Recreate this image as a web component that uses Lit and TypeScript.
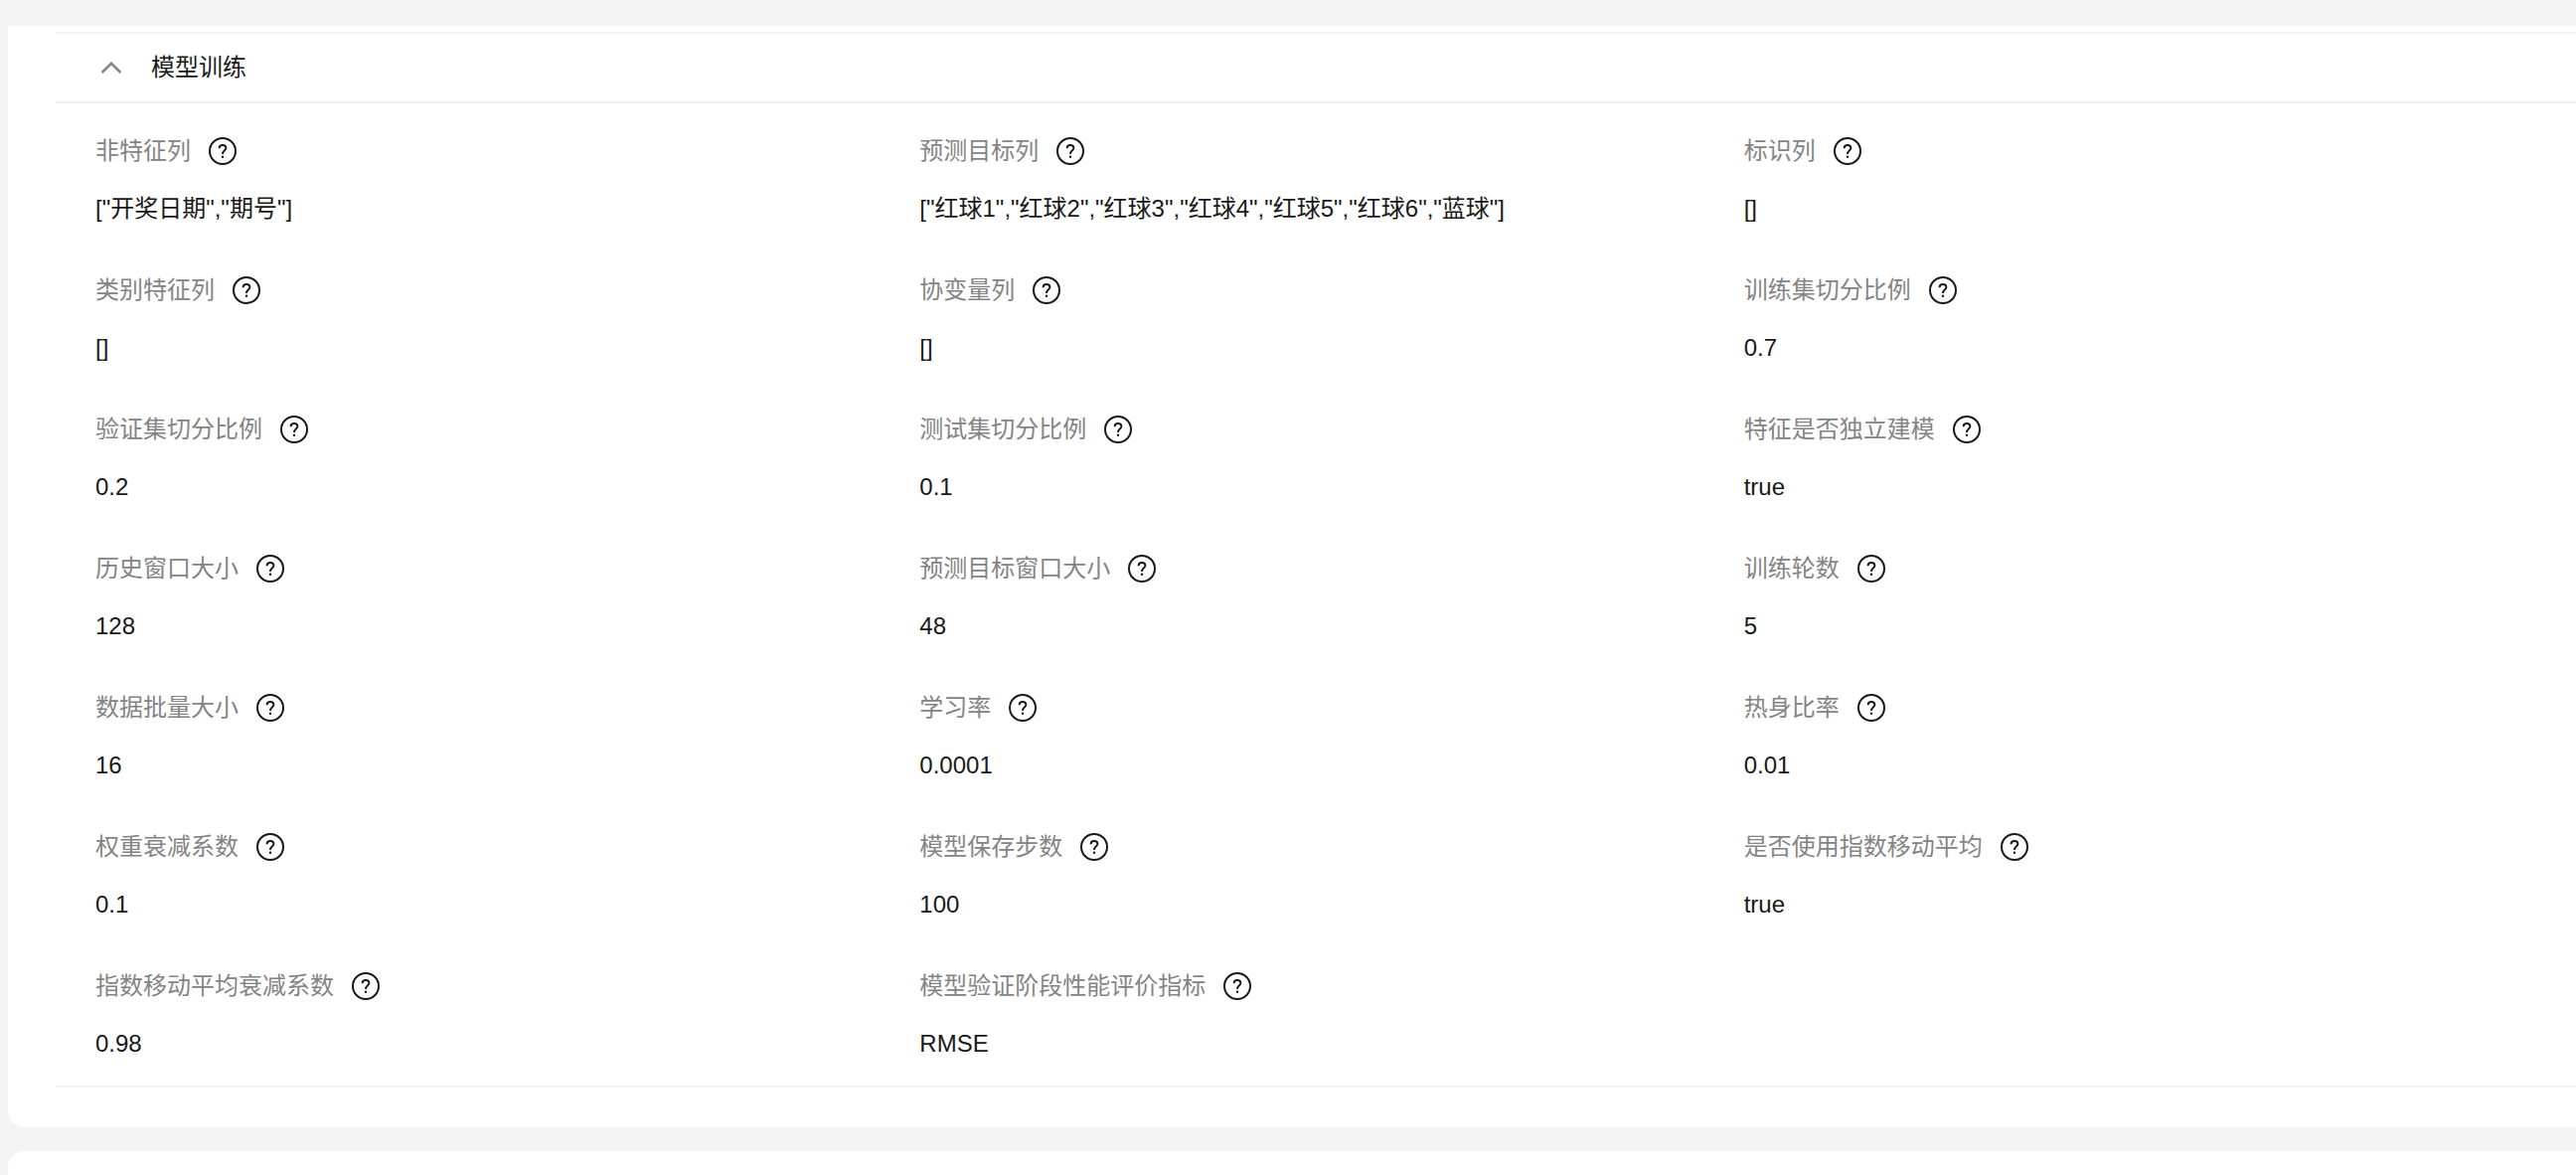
import { LitElement, html, css, svg, nothing } from "lit";
import { customElement, property, state } from "lit/decorators.js";

interface Param {
  label: string;
  value: string;
}

const PARAMS: Param[] = [
  { label: "非特征列", value: '["开奖日期","期号"]' },
  { label: "预测目标列", value: '["红球1","红球2","红球3","红球4","红球5","红球6","蓝球"]' },
  { label: "标识列", value: "[]" },
  { label: "类别特征列", value: "[]" },
  { label: "协变量列", value: "[]" },
  { label: "训练集切分比例", value: "0.7" },
  { label: "验证集切分比例", value: "0.2" },
  { label: "测试集切分比例", value: "0.1" },
  { label: "特征是否独立建模", value: "true" },
  { label: "历史窗口大小", value: "128" },
  { label: "预测目标窗口大小", value: "48" },
  { label: "训练轮数", value: "5" },
  { label: "数据批量大小", value: "16" },
  { label: "学习率", value: "0.0001" },
  { label: "热身比率", value: "0.01" },
  { label: "权重衰减系数", value: "0.1" },
  { label: "模型保存步数", value: "100" },
  { label: "是否使用指数移动平均", value: "true" },
  { label: "指数移动平均衰减系数", value: "0.98" },
  { label: "模型验证阶段性能评价指标", value: "RMSE" },
];

const helpIcon = svg`
  <circle cx="14" cy="14" r="13" stroke-width="2" />
  <path d="M10.6 11.2C10.6 9.2 12 8 14 8C16 8 17.4 9.2 17.4 11C17.4 13.4 14 13.4 14 17" stroke-width="1.9" />
  <circle class="dot" cx="14" cy="19.8" r="1.2" />
`;

@customElement("param-item")
export class ParamItem extends LitElement {
  @property() label = "";
  @property() value = "";

  static styles = css`
    :host {
      display: flex;
      flex-direction: column;
      gap: 14px;
      min-width: 0;
    }
    .label {
      display: flex;
      align-items: center;
      gap: 18px;
      line-height: 44px;
      color: #848484;
    }
    .help {
      display: flex;
      padding: 0;
      border: 0;
      background: none;
      color: #191919;
      cursor: pointer;
    }
    .icon {
      display: block;
      width: 28px;
      height: 28px;
      fill: none;
      stroke: currentColor;
    }
    .dot {
      fill: currentColor;
      stroke: none;
    }
    .value {
      line-height: 44px;
      color: #191919;
    }
  `;

  render() {
    return html`
      <div class="label">
        <span>${this.label}</span>
        <button class="help" type="button" aria-label="${this.label}说明">
          <svg class="icon" viewBox="0 0 28 28" aria-hidden="true">${helpIcon}</svg>
        </button>
      </div>
      <div class="value">${this.value}</div>
    `;
  }
}

@customElement("app-root")
export class AppRoot extends LitElement {
  @state() private open = true;

  static styles = css`
    :host {
      display: flex;
      flex-direction: column;
      gap: 24px;
      box-sizing: border-box;
      min-height: 100vh;
      padding: 26px 0 0 8px;
      background: #f4f4f4;
      font-family: "Liberation Sans", "Noto Sans CJK SC", sans-serif;
      font-size: 24px;
    }
    .card {
      padding: 6px 0 40px 48px;
      border-radius: 0 0 0 16px;
      background: #fff;
    }
    .next {
      flex: 1;
      border-radius: 16px 0 0 0;
      background: #fff;
    }
    .panel {
      border-top: 2px solid #f4f4f4;
      border-bottom: 2px solid #f4f4f4;
    }
    .title {
      margin: 0;
      font: inherit;
    }
    .toggle {
      display: flex;
      align-items: center;
      gap: 28px;
      width: 100%;
      height: 70px;
      padding: 0 44px;
      border: 0;
      border-bottom: 2px solid #efefef;
      background: none;
      color: #191919;
      font: inherit;
      line-height: 44px;
      text-align: left;
      cursor: pointer;
    }
    .chevron {
      width: 24px;
      height: 24px;
      fill: none;
      stroke: #848484;
      stroke-width: 2.5;
    }
    .closed .chevron {
      transform: rotate(180deg);
    }
    .grid {
      display: grid;
      grid-template-columns: repeat(3, minmax(0, 1fr));
      row-gap: 38px;
      padding: 26px 8px 20px 40px;
    }
  `;

  render() {
    return html`
      <section class="card">
        <div class="panel ${this.open ? "" : "closed"}">
          <h2 class="title">
            <button
              class="toggle"
              type="button"
              aria-expanded=${this.open ? "true" : "false"}
              @click=${() => (this.open = !this.open)}
            >
              <svg class="chevron" viewBox="0 0 24 24" aria-hidden="true">
                <path d="M2.6 17L12 7.8L21.4 17" />
              </svg>
              <span>模型训练</span>
            </button>
          </h2>
          ${this.open
            ? html`<div class="grid">
                ${PARAMS.map((p) => html`<param-item .label=${p.label} .value=${p.value}></param-item>`)}
              </div>`
            : nothing}
        </div>
      </section>
      <section class="next"></section>
    `;
  }
}
